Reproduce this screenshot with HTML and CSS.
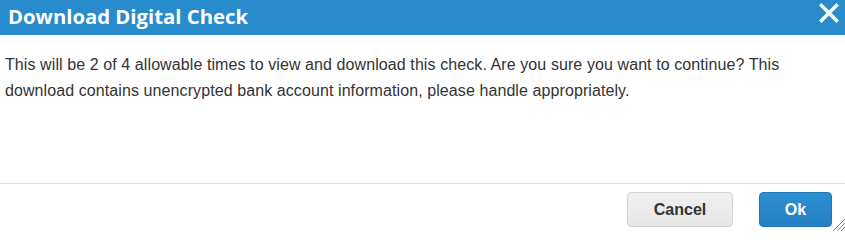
FILE: index.html
```html
<!DOCTYPE html>
<html>
<head>
<meta charset="utf-8">
<link rel="stylesheet" href="styles.css">
</head>
<body>
<div class="dialog">
  <div class="titlebar">
    <span class="title">Download Digital Check</span>
    <span class="close" aria-label="Close">
      <svg width="20" height="20" viewBox="0 0 20 20"><path d="M2.5 2.5 L17.5 17.5 M17.5 2.5 L2.5 17.5" stroke="#fff" stroke-width="3.4" stroke-linecap="square"/></svg>
    </span>
  </div>
  <div class="content">
    <p class="message">This will be 2 of 4 allowable times to view and download this check. Are you sure you want to continue? This download contains unencrypted bank account information, please handle appropriately.</p>
  </div>
  <div class="footer">
    <button class="btn btn-cancel">Cancel</button>
    <button class="btn btn-ok">Ok</button>
  </div>
  <svg class="grip" width="14" height="14" viewBox="0 0 14 14"><path d="M14 2 L2 14 M14 6 L6 14 M14 10 L10 14" stroke="#888" stroke-width="1"/></svg>
</div>
</body>
</html>
```
FILE: styles.css
```css
html, body {
  margin: 0;
  padding: 0;
  background: #fff;
}
.dialog {
  position: relative;
  width: 845px;
  height: 231px;
  display: flex;
  flex-direction: column;
  font-family: "Liberation Sans", Arial, sans-serif;
  overflow: hidden;
}
.titlebar {
  height: 35px;
  background: #288bcc;
  display: flex;
  align-items: center;
  justify-content: space-between;
  padding: 0 6px 0 8px;
  box-sizing: border-box;
}
.title {
  font-family: "Open Sans", sans-serif;
  font-weight: 700;
  font-size: 20.3px;
  color: #fff;
  margin-top: -4px;
}
.close {
  display: flex;
  margin-top: -9px;
}
.content {
  flex: 1;
  padding: 17px 20px 0 5px;
}
.message {
  margin: 0;
  font-size: 16px;
  line-height: 26px;
  letter-spacing: 0.09px;
  color: #333;
}
.footer {
  border-top: 1px solid #dedede;
  display: flex;
  justify-content: flex-end;
  gap: 26px;
  padding: 8px 13px 4px 0;
}
.btn {
  height: 35px;
  border-radius: 4px;
  font-family: "Liberation Sans", Arial, sans-serif;
  font-weight: 700;
  font-size: 16px;
  padding: 0;
}
.btn-cancel {
  width: 106px;
  background: linear-gradient(#f0f0f0, #e6e6e6);
  border: 1px solid #d4d4d4;
  color: #333;
}
.btn-ok {
  width: 73px;
  background: linear-gradient(#2c8fd0, #2580c2);
  border: 1px solid #2177b6;
  color: #fff;
}
.grip {
  position: absolute;
  right: 0;
  bottom: 0;
}
```
